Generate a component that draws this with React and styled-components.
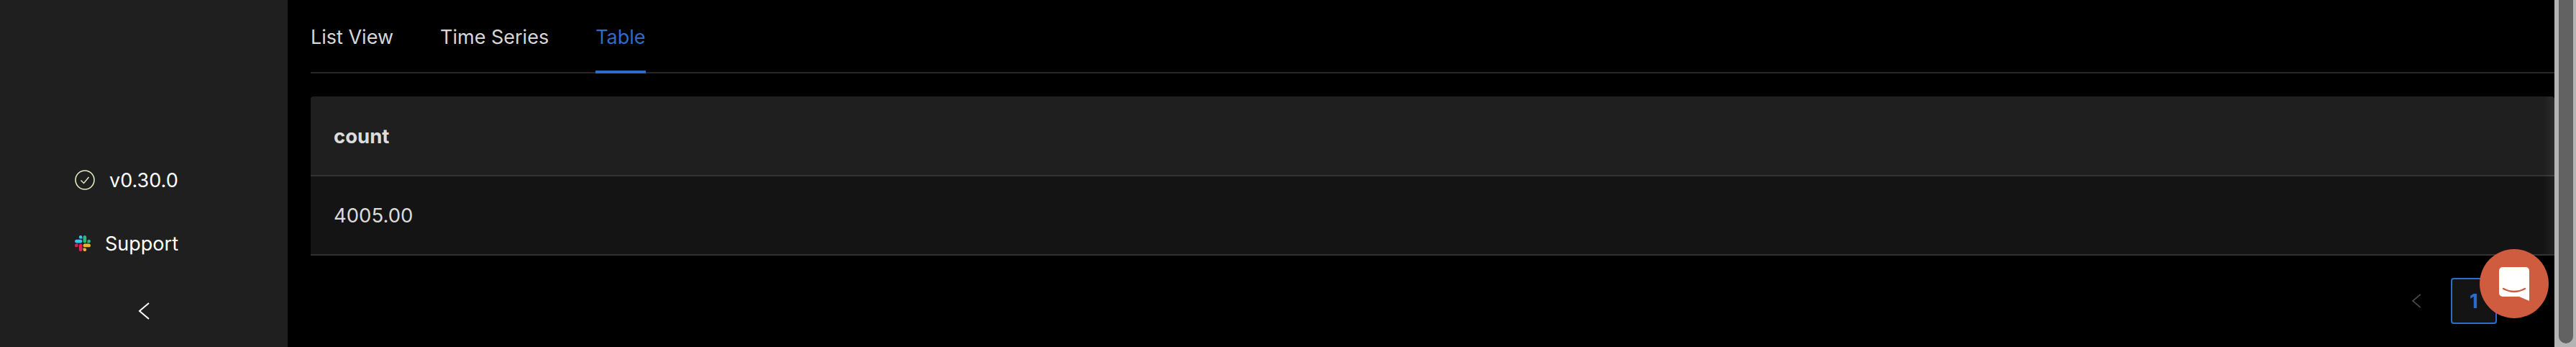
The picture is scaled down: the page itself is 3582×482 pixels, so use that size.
import React from 'react';
import styled, { createGlobalStyle } from 'styled-components';

const GlobalStyle = createGlobalStyle`
  html, body {
    margin: 0;
    padding: 0;
    background: #000;
    overflow: hidden;
  }
`;

const Page = styled.div`
  display: flex;
  width: 3582px;
  height: 482px;
  font-family: Inter, "Liberation Sans", sans-serif;
  font-size: 27.5px;
  overflow: hidden;
  -webkit-font-smoothing: antialiased;
`;

const Sidebar = styled.aside`
  flex: 0 0 400px;
  display: flex;
  flex-direction: column;
  justify-content: flex-end;
  background: #1f1f1f;
  color: #fff;
  font-size: 27px;
`;

const SideItem = styled.div`
  display: flex;
  align-items: center;
  gap: ${(p) => p.$gap}px;
  height: 88px;
  padding-left: 104px;
`;

const Collapse = styled.div`
  display: flex;
  align-items: center;
  justify-content: center;
  height: 100px;
  box-sizing: border-box;
`;

const Main = styled.main`
  flex: 1;
  min-width: 0;
  position: relative;
  padding-left: 32px;
  background: #000;
  color: rgba(255, 255, 255, 0.85);
`;

const TabBar = styled.nav`
  display: flex;
  gap: 65px;
  height: 100px;
  border-bottom: 2px solid #262626;
  font-size: 27px;
`;

const Tab = styled.div`
  position: relative;
  display: flex;
  align-items: center;
  height: 102px;
  padding-bottom: 0;
  padding-top: 8px;
  box-sizing: border-box;
  padding-bottom: 8px;
  height: 102px;
  line-height: 1;
  color: ${(p) => (p.$active ? '#2f6bc9' : 'rgba(255, 255, 255, 0.85)')};

  &::after {
    content: '';
    display: ${(p) => (p.$active ? 'block' : 'none')};
    position: absolute;
    left: 0;
    right: 0;
    bottom: 0;
    height: 4px;
    background: #2f6bc9;
  }
`;

const Table = styled.div`
  position: relative;
  margin-top: 32px;
  border-radius: 4px 4px 0 0;
  overflow: hidden;

  &::after {
    content: '';
    position: absolute;
    top: 0;
    right: 0;
    bottom: 2px;
    width: 16px;
    background: linear-gradient(to right, rgba(255, 255, 255, 0), rgba(255, 255, 255, 0.05));
  }
`;

const HeadCell = styled.div`
  display: flex;
  align-items: center;
  height: 109px;
  padding-left: 32px;
  background: #1f1f1f;
  border-bottom: 2px solid #333;
  box-sizing: content-box;
  font-weight: 700;
`;

const BodyCell = styled.div`
  display: flex;
  align-items: center;
  height: 108px;
  padding-left: 32px;
  background: #141414;
  border-bottom: 2px solid #333;
`;

const Pagination = styled.div`
  display: flex;
  justify-content: flex-end;
  gap: 16px;
  margin-top: 31px;
`;

const PageSlot = styled.div`
  display: flex;
  align-items: center;
  justify-content: center;
  width: 64px;
  height: 64px;
  box-sizing: border-box;
`;

const PageCurrent = styled(PageSlot)`
  background: #141414;
  border: 2px solid #2f6bc9;
  border-radius: 4px;
  color: #2f6bc9;
  font-weight: 700;
`;

const ChatBubble = styled.div`
  position: absolute;
  right: 8px;
  top: 346px;
  display: flex;
  align-items: center;
  justify-content: center;
  width: 96px;
  height: 96px;
  border-radius: 50%;
  background: #cf5c3f;
`;

const Scrollbar = styled.div`
  flex: 0 0 30px;
  box-sizing: border-box;
  padding: 0 4px 5px 6px;
  height: 482px;
  background: #b4b4b4;
`;

const ScrollThumb = styled.div`
  height: 100%;
  border-radius: 0 0 10px 10px;
  background: #626262;
`;

const VersionIcon = () => (
  <svg width="28" height="28" viewBox="0 0 28 28" fill="none" stroke="#dcedc1">
    <circle cx="14" cy="14" r="13" strokeWidth="1.6" />
    <path d="M8.5 14.5l4 4 7-8.5" strokeWidth="1.5" fill="none" />
  </svg>
);

const SlackIcon = () => (
  <svg width="22" height="22" viewBox="0 0 122.8 122.8">
    <path fill="#e01e5a" d="M25.8 77.6c0 7.1-5.8 12.9-12.9 12.9S0 84.7 0 77.6s5.8-12.9 12.9-12.9h12.9v12.9zM32.3 77.6c0-7.1 5.8-12.9 12.9-12.9s12.9 5.8 12.9 12.9v32.3c0 7.1-5.8 12.9-12.9 12.9s-12.9-5.8-12.9-12.9V77.6z" />
    <path fill="#36c5f0" d="M45.2 25.8c-7.1 0-12.9-5.8-12.9-12.9S38.1 0 45.2 0s12.9 5.8 12.9 12.9v12.9H45.2zM45.2 32.3c7.1 0 12.9 5.8 12.9 12.9s-5.8 12.9-12.9 12.9H12.9C5.8 58.1 0 52.3 0 45.2s5.8-12.9 12.9-12.9h32.3z" />
    <path fill="#2eb67d" d="M97 45.2c0-7.1 5.8-12.9 12.9-12.9s12.9 5.8 12.9 12.9-5.8 12.9-12.9 12.9H97V45.2zM90.5 45.2c0 7.1-5.8 12.9-12.9 12.9s-12.9-5.8-12.9-12.9V12.9C64.7 5.8 70.5 0 77.6 0s12.9 5.8 12.9 12.9v32.3z" />
    <path fill="#ecb22e" d="M77.6 97c7.1 0 12.9 5.8 12.9 12.9s-5.8 12.9-12.9 12.9-12.9-5.8-12.9-12.9V97h12.9zM77.6 90.5c-7.1 0-12.9-5.8-12.9-12.9s5.8-12.9 12.9-12.9h32.3c7.1 0 12.9 5.8 12.9 12.9s-5.8 12.9-12.9 12.9H77.6z" />
  </svg>
);

const Chevron = ({ color, w = 16, h = 24, flip }) => (
  <svg width={w} height={h} viewBox="0 0 16 24" fill="none" stroke={color} strokeWidth="2"
    style={flip ? { transform: 'scaleX(-1)' } : undefined}>
    <path d="M15 1L2 12l13 11" />
  </svg>
);

const ChatIcon = () => (
  <svg width="42" height="47" viewBox="0 0 42 47">
    <path fill="#fff" d="M5 0h32a5 5 0 0 1 5 5v42l-14-6H5a5 5 0 0 1-5-5V5a5 5 0 0 1 5-5z" />
    <path d="M6 30q15 8 30 0" fill="none" stroke="#cf5c3f" strokeWidth="2.5" strokeLinecap="round" />
  </svg>
);

export default function App() {
  return (
    <Page>
      <GlobalStyle />
      <Sidebar>
        <SideItem $gap={20}>
          <VersionIcon />
          <span>v0.30.0</span>
        </SideItem>
        <SideItem $gap={20}>
          <SlackIcon />
          <span>Support</span>
        </SideItem>
        <Collapse>
          <Chevron color="#fff" />
        </Collapse>
      </Sidebar>
      <Main>
        <TabBar>
          <Tab>List View</Tab>
          <Tab>Time Series</Tab>
          <Tab $active>Table</Tab>
        </TabBar>
        <Table>
          <HeadCell>count</HeadCell>
          <BodyCell>4005.00</BodyCell>
        </Table>
        <Pagination>
          <PageSlot>
            <Chevron color="#4a4a4a" w={14} h={20} />
          </PageSlot>
          <PageCurrent>1</PageCurrent>
          <PageSlot>
            <Chevron color="#4a4a4a" w={14} h={20} flip />
          </PageSlot>
        </Pagination>
        <ChatBubble>
          <ChatIcon />
        </ChatBubble>
      </Main>
      <Scrollbar>
        <ScrollThumb />
      </Scrollbar>
    </Page>
  );
}
